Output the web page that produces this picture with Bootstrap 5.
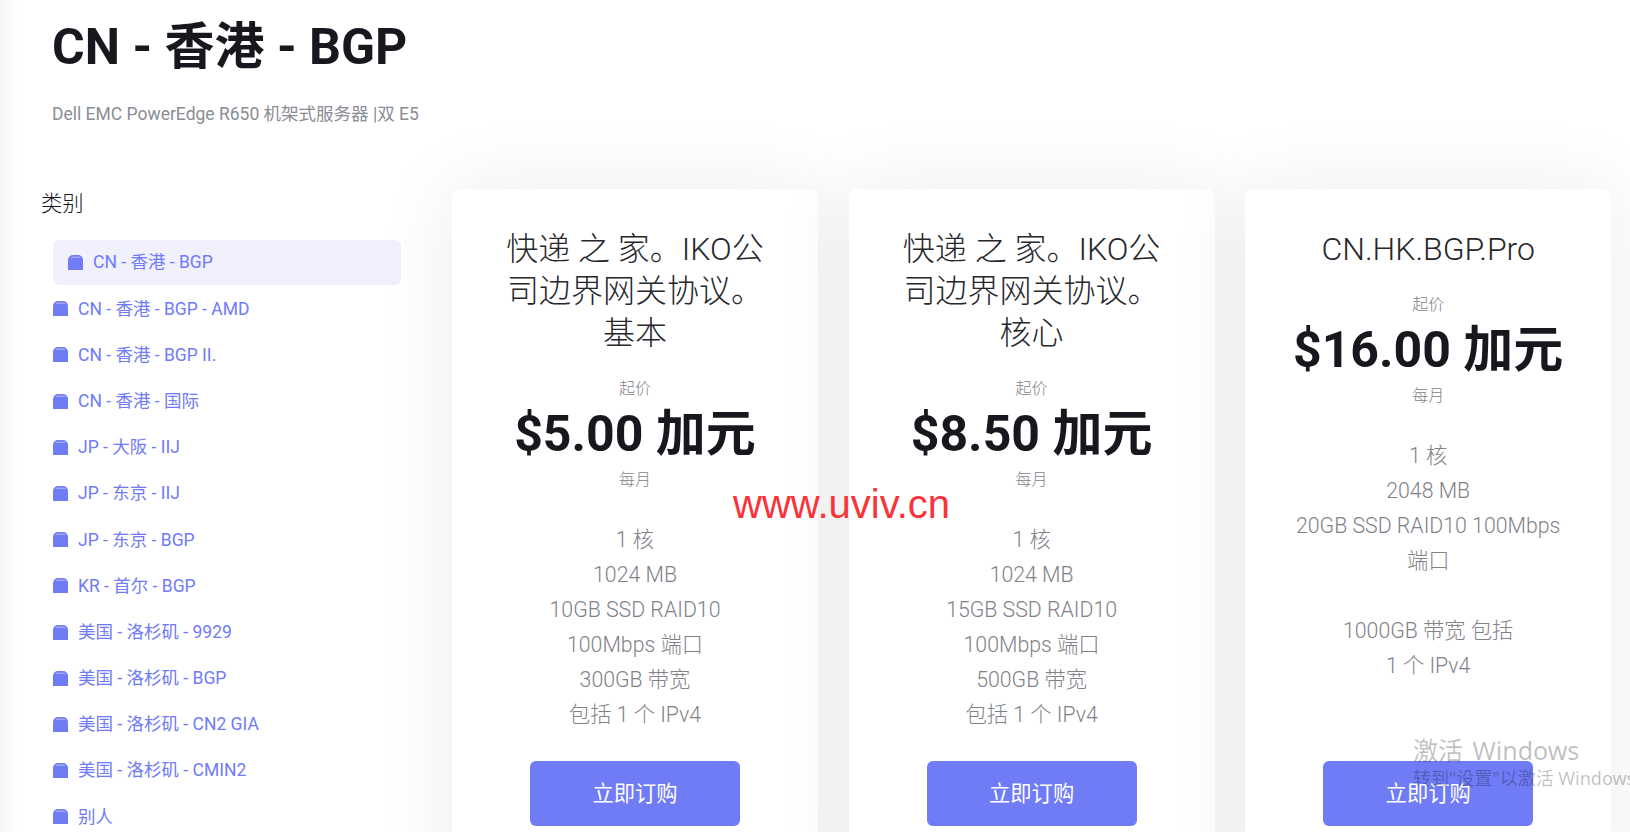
<!DOCTYPE html>
<html lang="zh-CN">
  <head>
    <meta charset="UTF-8" />
    <meta name="viewport" content="width=device-width, initial-scale=1.0" />
    <title>CN - 香港 - BGP</title>
    <link
      rel="stylesheet"
      href="https://cdn.jsdelivr.net/npm/bootstrap@5.3.0/dist/css/bootstrap.min.css"
    />
    <style>
      html, body { height: 832px; overflow: hidden; }
      body {
        font-family: Roboto, "Noto Sans CJK SC", sans-serif;
        color: #16181d;
        background: #fff;
        box-shadow: inset 22px 0 22px -22px rgba(0, 0, 0, .08);
      }
      .page-head { padding: 14px 0 0 52px; height: 189px; }
      .page-head h1 { font-size: 50px; font-weight: 700; line-height: 66px; margin: 0; }
      .page-sub { font-size: 17.5px; font-weight: 400; color: #8a8d93; line-height: 26px; margin: 21px 0 0; }
      .side { width: 452px; padding-left: 41px; flex: none; }
      .side-title { font-size: 21.3px; font-weight: 300; line-height: 28px; margin: 1px 0 22px; }
      .side-list { margin-left: 12px; width: 348px; }
      .side-link {
        display: flex; align-items: center; gap: 10px;
        height: 45px; margin-bottom: 1.2px;
        font-size: 17.5px; font-weight: 400; color: #707bf6; text-decoration: none;
      }
      .side-link.is-on { background: #f1f1fe; border-radius: 6px; padding-left: 15px; }
      .side-ico { width: 15px; height: 15px; flex: none; }
      .plans { display: flex; gap: 30.6px; }
      .plan {
        width: 366px; height: 699px; flex: none;
        padding: 39px 46px 62px;
        background: #fff; border: 0; border-radius: 8px;
        box-shadow: 0 0 80px rgba(0, 0, 0, .08);
        text-align: center;
      }
      .plan-name { font-size: 32px; font-weight: 300; line-height: 42px; margin: 0 0 24px; color: #26282d; }
      .plan-tag { font-size: 16px; font-weight: 300; color: #7f8289; line-height: 22px; }
      .plan-price { font-size: 50px; font-weight: 700; line-height: 69px; }
      .plan-specs { font-size: 21.3px; font-weight: 300; color: #7f8289; line-height: 35px; margin-top: 31px; }
      .buy-btn {
        width: 210px; height: 65px; border: 0; border-radius: 6px;
        background: #707bf6; color: #fff; font-size: 21.3px;
      }
      .buy-btn:hover { background: #5f6be8; color: #fff; }
      .mark-site {
        position: absolute; left: 733px; top: 482px;
        font-family: "Liberation Sans", sans-serif; font-size: 40px; line-height: 44px;
        color: #f9333a;
      }
      .mark-win {
        position: absolute; left: 1413px; top: 732px; white-space: nowrap;
        font-family: "Noto Sans", "Noto Sans CJK SC", sans-serif; color: rgba(0, 0, 0, .25);
      }
      .mark-win div:first-child { font-size: 25px; line-height: 36px; word-spacing: 3px; }
      .mark-win div:last-child { font-size: 18px; line-height: 21px; }
    </style>
  </head>
  <body>
    <header class="page-head">
      <h1>CN - 香港 - BGP</h1>
      <p class="page-sub">Dell EMC PowerEdge R650 机架式服务器 |双 E5</p>
    </header>

    <main class="d-flex">
      <aside class="side">
        <div class="side-title">类别</div>
        <nav class="side-list">
          <a class="side-link is-on" href="#"><svg class="side-ico" viewBox="0 0 15 15"><path fill="#707bf6" d="M0 15V5a5 5 0 0 1 5-5h5a5 5 0 0 1 5 5v10z"/><path fill="#a4a9fa" d="M2 3a3 3 0 0 1 2.500-1.500h6A3 3 0 0 1 13 3z"/></svg>CN - 香港 - BGP</a>
          <a class="side-link" href="#"><svg class="side-ico" viewBox="0 0 15 15"><path fill="#707bf6" d="M0 15V5a5 5 0 0 1 5-5h5a5 5 0 0 1 5 5v10z"/><path fill="#a4a9fa" d="M2 3a3 3 0 0 1 2.500-1.500h6A3 3 0 0 1 13 3z"/></svg>CN - 香港 - BGP - AMD</a>
          <a class="side-link" href="#"><svg class="side-ico" viewBox="0 0 15 15"><path fill="#707bf6" d="M0 15V5a5 5 0 0 1 5-5h5a5 5 0 0 1 5 5v10z"/><path fill="#a4a9fa" d="M2 3a3 3 0 0 1 2.500-1.500h6A3 3 0 0 1 13 3z"/></svg>CN - 香港 - BGP II.</a>
          <a class="side-link" href="#"><svg class="side-ico" viewBox="0 0 15 15"><path fill="#707bf6" d="M0 15V5a5 5 0 0 1 5-5h5a5 5 0 0 1 5 5v10z"/><path fill="#a4a9fa" d="M2 3a3 3 0 0 1 2.500-1.500h6A3 3 0 0 1 13 3z"/></svg>CN - 香港 - 国际</a>
          <a class="side-link" href="#"><svg class="side-ico" viewBox="0 0 15 15"><path fill="#707bf6" d="M0 15V5a5 5 0 0 1 5-5h5a5 5 0 0 1 5 5v10z"/><path fill="#a4a9fa" d="M2 3a3 3 0 0 1 2.500-1.500h6A3 3 0 0 1 13 3z"/></svg>JP - 大阪 - IIJ</a>
          <a class="side-link" href="#"><svg class="side-ico" viewBox="0 0 15 15"><path fill="#707bf6" d="M0 15V5a5 5 0 0 1 5-5h5a5 5 0 0 1 5 5v10z"/><path fill="#a4a9fa" d="M2 3a3 3 0 0 1 2.500-1.500h6A3 3 0 0 1 13 3z"/></svg>JP - 东京 - IIJ</a>
          <a class="side-link" href="#"><svg class="side-ico" viewBox="0 0 15 15"><path fill="#707bf6" d="M0 15V5a5 5 0 0 1 5-5h5a5 5 0 0 1 5 5v10z"/><path fill="#a4a9fa" d="M2 3a3 3 0 0 1 2.500-1.500h6A3 3 0 0 1 13 3z"/></svg>JP - 东京 - BGP</a>
          <a class="side-link" href="#"><svg class="side-ico" viewBox="0 0 15 15"><path fill="#707bf6" d="M0 15V5a5 5 0 0 1 5-5h5a5 5 0 0 1 5 5v10z"/><path fill="#a4a9fa" d="M2 3a3 3 0 0 1 2.500-1.500h6A3 3 0 0 1 13 3z"/></svg>KR - 首尔 - BGP</a>
          <a class="side-link" href="#"><svg class="side-ico" viewBox="0 0 15 15"><path fill="#707bf6" d="M0 15V5a5 5 0 0 1 5-5h5a5 5 0 0 1 5 5v10z"/><path fill="#a4a9fa" d="M2 3a3 3 0 0 1 2.500-1.500h6A3 3 0 0 1 13 3z"/></svg>美国 - 洛杉矶 - 9929</a>
          <a class="side-link" href="#"><svg class="side-ico" viewBox="0 0 15 15"><path fill="#707bf6" d="M0 15V5a5 5 0 0 1 5-5h5a5 5 0 0 1 5 5v10z"/><path fill="#a4a9fa" d="M2 3a3 3 0 0 1 2.500-1.500h6A3 3 0 0 1 13 3z"/></svg>美国 - 洛杉矶 - BGP</a>
          <a class="side-link" href="#"><svg class="side-ico" viewBox="0 0 15 15"><path fill="#707bf6" d="M0 15V5a5 5 0 0 1 5-5h5a5 5 0 0 1 5 5v10z"/><path fill="#a4a9fa" d="M2 3a3 3 0 0 1 2.500-1.500h6A3 3 0 0 1 13 3z"/></svg>美国 - 洛杉矶 - CN2 GIA</a>
          <a class="side-link" href="#"><svg class="side-ico" viewBox="0 0 15 15"><path fill="#707bf6" d="M0 15V5a5 5 0 0 1 5-5h5a5 5 0 0 1 5 5v10z"/><path fill="#a4a9fa" d="M2 3a3 3 0 0 1 2.500-1.500h6A3 3 0 0 1 13 3z"/></svg>美国 - 洛杉矶 - CMIN2</a>
          <a class="side-link" href="#"><svg class="side-ico" viewBox="0 0 15 15"><path fill="#707bf6" d="M0 15V5a5 5 0 0 1 5-5h5a5 5 0 0 1 5 5v10z"/><path fill="#a4a9fa" d="M2 3a3 3 0 0 1 2.500-1.500h6A3 3 0 0 1 13 3z"/></svg>别人</a>
        </nav>
      </aside>

      <section class="plans">
        <div class="card plan">
          <h3 class="plan-name">快递 之 家。IKO公司边界网关协议。基本</h3>
          <div class="plan-tag">起价</div>
          <div class="plan-price">$5.00 加元</div>
          <div class="plan-tag">每月</div>
          <div class="plan-specs">1 核<br />1024 MB<br />10GB SSD RAID10<br />100Mbps 端口<br />300GB 带宽<br />包括 1 个 IPv4</div>
          <div class="mt-auto"><button type="button" class="btn buy-btn">立即订购</button></div>
        </div>
        <div class="card plan">
          <h3 class="plan-name">快递 之 家。IKO公司边界网关协议。核心</h3>
          <div class="plan-tag">起价</div>
          <div class="plan-price">$8.50 加元</div>
          <div class="plan-tag">每月</div>
          <div class="plan-specs">1 核<br />1024 MB<br />15GB SSD RAID10<br />100Mbps 端口<br />500GB 带宽<br />包括 1 个 IPv4</div>
          <div class="mt-auto"><button type="button" class="btn buy-btn">立即订购</button></div>
        </div>
        <div class="card plan">
          <h3 class="plan-name">CN.HK.BGP.Pro</h3>
          <div class="plan-tag">起价</div>
          <div class="plan-price">$16.00 加元</div>
          <div class="plan-tag">每月</div>
          <div class="plan-specs">1 核<br />2048 MB<br />20GB SSD RAID10 100Mbps 端口<br /><br />1000GB 带宽 包括<br />1 个 IPv4</div>
          <div class="mt-auto"><button type="button" class="btn buy-btn">立即订购</button></div>
        </div>
      </section>
    </main>

    <div class="mark-site">www.uviv.cn</div>
    <div class="mark-win"><div>激活 Windows</div><div>转到"设置"以激活 Windows。</div></div>

    <script src="https://cdn.jsdelivr.net/npm/bootstrap@5.3.0/dist/js/bootstrap.bundle.min.js"></script>
  </body>
</html>
